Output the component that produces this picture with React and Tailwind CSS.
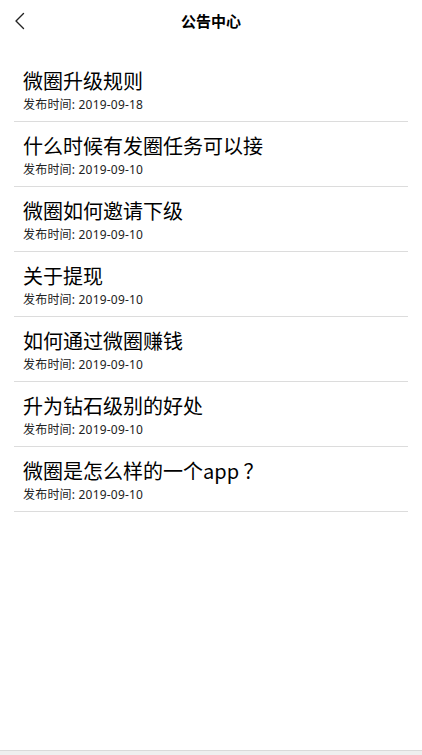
import React from 'react';

const NOTICES = [
  { title: '微圈升级规则', date: '2019-09-18' },
  { title: '什么时候有发圈任务可以接', date: '2019-09-10' },
  { title: '微圈如何邀请下级', date: '2019-09-10' },
  { title: '关于提现', date: '2019-09-10' },
  { title: '如何通过微圈赚钱', date: '2019-09-10' },
  { title: '升为钻石级别的好处', date: '2019-09-10' },
  { title: '微圈是怎么样的一个app ？', date: '2019-09-10' },
];

const font = { fontFamily: '"Noto Sans", "Noto Sans CJK SC", sans-serif' };
const cjk = { fontFamily: '"Noto Sans CJK SC", "Noto Sans", sans-serif' };

const App = () => {
  return (
    <div style={font} className="flex h-[755px] w-full flex-col overflow-hidden bg-white text-black">
      {/* header */}
      <div className="relative flex h-[42px] shrink-0 items-center justify-center">
        <button className="absolute left-[10px] top-[9px] flex h-[24px] w-[20px] items-center justify-center">
          <svg width="14" height="20" viewBox="0 0 14 20" fill="none">
            <path d="M10.5 2.5 L3 10 L10.5 17.5" stroke="#222" strokeWidth="1.4" strokeLinecap="round" strokeLinejoin="round" />
          </svg>
        </button>
        <h1 className="text-[15px] font-bold leading-none">公告中心</h1>
      </div>

      {/* list */}
      <div className="mt-[15px] px-[14px]">
        {NOTICES.map(n => (
          <div key={n.title} className="border-b border-[#dcdcdc] pb-[8px] pl-[9px] pt-[10px]">
            <p style={cjk} className="text-[20px] leading-[28px]">{n.title}</p>
            <p className="mt-[2px] text-[12px] leading-[16px] tracking-[0.2px] text-[#222]">发布时间: {n.date}</p>
          </div>
        ))}
      </div>

      <div className="flex-1" />
      <div className="h-[5px] shrink-0 border-t border-[#dadada] bg-[#efefef]" />
    </div>
  );
};

export default App;
